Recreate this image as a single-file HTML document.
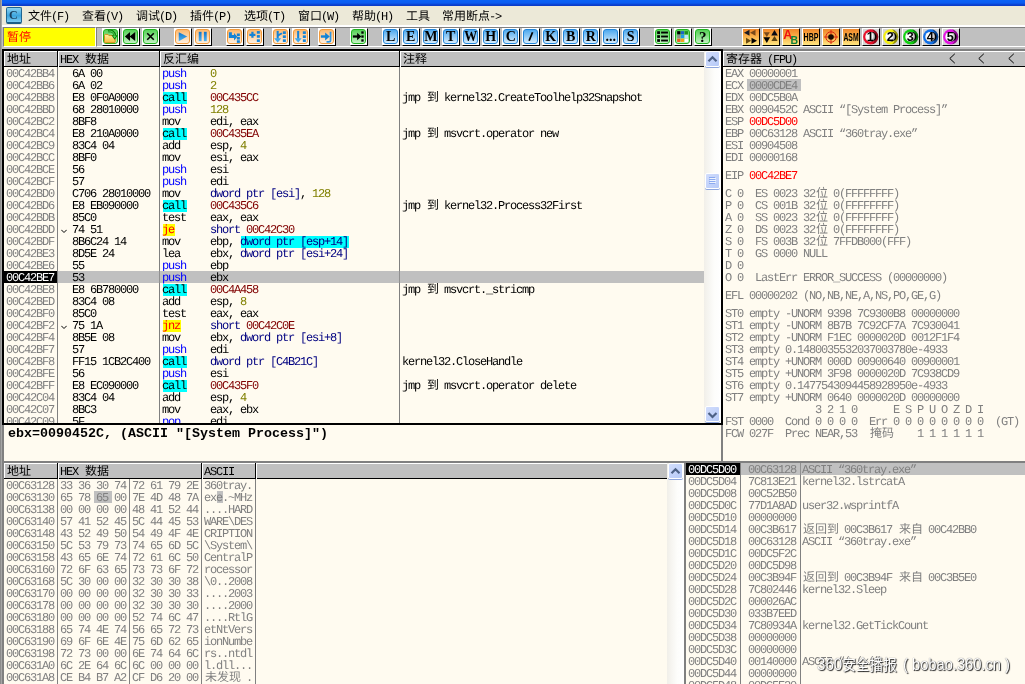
<!DOCTYPE html>
<html lang="zh"><head><meta charset="utf-8"><title>OllyDbg</title><style>
*{box-sizing:border-box}
html,body{margin:0;padding:0}
body{width:1025px;height:684px;overflow:hidden;position:relative;background:#FFFBF0;font-family:"Liberation Mono","Noto Sans CJK SC",monospace;font-size:12px;line-height:12px;color:#000}
div,span,i,b{position:absolute;display:block;font-style:normal;font-weight:normal;white-space:pre}
.r{left:0;height:12px;width:100%}
.r span,.t{font-family:"Liberation Mono","Noto Sans CJK SC",monospace;font-size:12px;letter-spacing:-1.201px;line-height:12px;height:12px;top:1px;text-rendering:geometricPrecision;text-indent:-1px}
.r span.c,.c{font-family:"Noto Sans CJK SC","Liberation Mono",sans-serif;letter-spacing:0;top:0px;text-indent:0}
.g{color:#808080}
.bl{color:#0000FF}.ol{color:#808000}.dr{color:#800000}.nv{color:#000080}.rd{color:#FF0000}.wh{color:#fff}
.cy{background:#00FFFF}.ye{background:#FFFF00}.gr{background:#C0C0C0}.bk{background:#000}
.hd{background:#C0C0C0;height:15px;border-top:1px solid #fff;border-left:1px solid #fff}
.hl{top:15px;height:1px;background:#000}
.hs{top:0;width:2px;height:16px;background:#000;border-right:1px solid #fff}
.vl{width:1px;background:#808080}
.pane{overflow:hidden;background:#FFFBF0}
.btn{width:18px;height:18px;top:28px;border-left:1px solid #fff;border-top:1px solid #fff;border-right:1px solid #000;border-bottom:1px solid #000;background:#fff}
.ic{left:0;top:0;width:15px;height:15px;border-radius:3px}
.gn{border:1.500px solid #1DB51D;background:linear-gradient(#56D056,#84DE84 45%,#C4F2C4)}
.og{border:1.500px solid #F29A3A;background:linear-gradient(#FDB86E,#FFD2A2 45%,#FFF0E0)}
.bu{border:1.500px solid #1F86DC;background:linear-gradient(#4FA9EE,#8CC8F5 45%,#D6ECFD)}
.sq{border-radius:0;width:16px;height:16px;background:linear-gradient(#F08628,#F8AE48 45%,#FFE680)}
.lt{left:0;top:0;width:15.500px;height:16px;text-align:center;font:bold 14px/16px "Liberation Serif",serif;color:#000}
.sb{background:linear-gradient(90deg,#F1EFE9,#FDFDFB 60%,#FFFFFF)}
.sbb{background:linear-gradient(135deg,#D2DDFC,#B6CAF8);border:1px solid #fff;border-radius:2px;box-shadow:0 1px 0 #8EA6DD}
svg{position:absolute;display:block}
</style></head><body>
<div style="left:0;top:0;width:1025px;height:684px;overflow:hidden;will-change:transform">
<div style="left:0;top:0;width:1025px;height:6px;background:linear-gradient(#0A62F6,#0A5CF0 50%,#0A44D4 75%,#0A38C4)"></div>
<div style="left:0;top:6px;width:1025px;height:19px;background:#ECE9D8"></div>
<div style="left:0;top:25px;width:1025px;height:2px;background:#fff"></div>
<div style="left:0;top:27px;width:1025px;height:22px;background:#C0C0C0"></div>
<div style="left:96px;top:27px;width:929px;height:20px;border-top:1px solid #808080;border-left:1px solid #808080;border-bottom:1px solid #fff;background:#C0C0C0"></div>
<div style="left:0;top:0;width:1px;height:684px;background:#8C8C8C"></div>
<div style="left:1px;top:0;width:1px;height:684px;background:#A6A6A6"></div>
<div style="left:6px;top:7px;width:16px;height:17px;border-radius:2px;border:1px solid #1F6690;border-bottom:2px solid #1D5F88;background:linear-gradient(#8AD2F2,#3DA5DE 55%,#7CCBF0)"><b class="lt" style="left:-1.500px;top:-1px;color:#1A3F5C;font-size:12px">C</b></div>
<div class="r" style="top:10px">
<span class="c" style="left:28px">文件</span>
<span style="left:52px">(F)</span>
<span class="c" style="left:82px">查看</span>
<span style="left:106px">(V)</span>
<span class="c" style="left:136px">调试</span>
<span style="left:160px">(D)</span>
<span class="c" style="left:190px">插件</span>
<span style="left:214px">(P)</span>
<span class="c" style="left:244px">选项</span>
<span style="left:268px">(T)</span>
<span class="c" style="left:298px">窗口</span>
<span style="left:322px">(W)</span>
<span class="c" style="left:352px">帮助</span>
<span style="left:376px">(H)</span>
<span class="c" style="left:406px">工具</span>
<span class="c" style="left:442px">常用断点</span>
<span style="left:490px">-&gt;</span>
</div>
<div style="left:3px;top:27px;width:93px;height:20px;border:1px solid #808080;border-right-color:#fff;border-bottom-color:#fff;background:#FFFF00"></div>
<div class="r" style="top:31px"><span class="rd c" style="left:7px">暂停</span></div>
<div class="btn" style="left:102px"><i class="ic gn"></i><svg width="15" height="15" viewBox="0 0 16 16" style="left:0;top:0"><defs><linearGradient id="fg" x1="0" y1="0" x2="0" y2="1"><stop offset="0" stop-color="#FFF0A0"/><stop offset="1" stop-color="#F6BC3C"/></linearGradient></defs><path d="M1.600 6.800q0-1 1-1h2.700l1 1.200h5.700q1 0 1 1v5.600q0 1-1 1h-9.400q-1 0-1-1z" fill="url(#fg)" stroke="#D48A14" stroke-width="1"/><path d="M5.500 2.300C9 1.200 12.400 3 12.600 7.200" stroke="#0B7A0B" stroke-width="2.800" fill="none"/><path d="M9 6.600h6.800l-3.400 4.800z" fill="#0B7A0B"/><path d="M5.800 2.400C9 1.700 11.900 3.300 12.300 7" stroke="#58D858" stroke-width="1.100" fill="none"/><path d="M10.600 7.300h3.600l-1.800 2.600z" fill="#58D858"/></svg></div>
<div class="btn" style="left:122px"><i class="ic gn"></i><svg width="15" height="15" viewBox="0 0 16 16" style="left:0;top:0"><path d="M7.500 3.300v9.400L2 8zM13 3.300v9.400L7 8z" fill="#000"/></svg></div>
<div class="btn" style="left:142px"><i class="ic gn"></i><svg width="15" height="15" viewBox="0 0 16 16" style="left:0;top:0"><path d="M4.500 4.500l7 7M11.500 4.500l-7 7" stroke="#000" stroke-width="1.700"/></svg></div>
<div class="btn" style="left:174px"><i class="ic og"></i><svg width="15" height="15" viewBox="0 0 16 16" style="left:0;top:0"><defs><linearGradient id="bg1" x1="0" y1="0" x2="0" y2="1"><stop offset="0" stop-color="#0E74CC"/><stop offset="1" stop-color="#4FB3F0"/></linearGradient></defs><path d="M4 3.500v9.500L13 8z" fill="url(#bg1)"/></svg></div>
<div class="btn" style="left:194px"><i class="ic og"></i><svg width="15" height="15" viewBox="0 0 16 16" style="left:0;top:0"><rect x="4" y="3" width="3" height="10" fill="url(#bg1)"/><rect x="9.500" y="3" width="3" height="10" fill="url(#bg1)"/></svg></div>
<div class="btn" style="left:226px"><i class="ic og"></i><svg width="15" height="15" viewBox="0 0 16 16" style="left:0;top:0"><path d="M2 3.500h3.200v3h2.300v-2.300l3.500 4-3.500 4v-2.500h-5.500z" fill="#1583D6"/><rect x="10.5" y="4.8" width="3.200" height="2.800" fill="#1583D6"/><rect x="10.5" y="8.5" width="3.200" height="2.800" fill="#1583D6"/><rect x="10.5" y="12" width="3.200" height="2.800" fill="#1583D6"/></svg></div>
<div class="btn" style="left:246px"><i class="ic og"></i><svg width="15" height="15" viewBox="0 0 16 16" style="left:0;top:0"><path d="M2.500 6.200h6.500M5.800 3v6.400" stroke="#1583D6" stroke-width="2.400"/><rect x="10.5" y="2.2" width="3.200" height="2.800" fill="#1583D6"/><rect x="10.5" y="6.5" width="3.200" height="2.800" fill="#1583D6"/><rect x="10.5" y="11" width="3.200" height="2.800" fill="#1583D6"/></svg></div>
<div class="btn" style="left:272px"><i class="ic og"></i><svg width="15" height="15" viewBox="0 0 16 16" style="left:0;top:0"><path d="M5 2v8.500" stroke="#1583D6" stroke-width="2.200"/><path d="M5 7l4.500-2.500" stroke="#1583D6" stroke-width="2"/><path d="M1.200 9.800h7.600L5 14.500z" fill="#3FA6EA"/><rect x="10.5" y="2.5" width="3.200" height="2.800" fill="#1583D6"/><rect x="10.5" y="6.8" width="3.200" height="2.800" fill="#1583D6"/><rect x="10.5" y="11" width="3.200" height="2.800" fill="#1583D6"/></svg></div>
<div class="btn" style="left:292px"><i class="ic og"></i><svg width="15" height="15" viewBox="0 0 16 16" style="left:0;top:0"><path d="M5.500 2v8.500" stroke="#1583D6" stroke-width="2.200"/><path d="M1.700 9.800h7.600L5.500 14.500z" fill="#3FA6EA"/><rect x="10.5" y="2.5" width="3.200" height="2.800" fill="#1583D6"/><rect x="10.5" y="6.8" width="3.200" height="2.800" fill="#1583D6"/><rect x="10.5" y="11" width="3.200" height="2.800" fill="#1583D6"/></svg></div>
<div class="btn" style="left:318px"><i class="ic og"></i><svg width="15" height="15" viewBox="0 0 16 16" style="left:0;top:0"><path d="M2 8h7" stroke="#1583D6" stroke-width="2.600"/><path d="M6.500 3.800L11.500 8 6.500 12.200z" fill="#1583D6"/><path d="M12.300 3v9q0 1.800-1.800 1.800H8" stroke="#2E96E2" stroke-width="1.800" fill="none"/></svg></div>
<div class="btn" style="left:350px"><i class="ic gn"></i><svg width="15" height="15" viewBox="0 0 16 16" style="left:0;top:0"><path d="M2 8h6" stroke="#000" stroke-width="2.400"/><path d="M6.500 4L11 8 6.500 12z" fill="#000"/><rect x="11" y="2.500" width="2.500" height="2.500" fill="#000"/><rect x="11" y="6.800" width="2.500" height="2.500" fill="#000"/><rect x="11" y="11" width="2.500" height="2.500" fill="#000"/></svg></div>
<div class="btn" style="left:382px"><i class="ic bu"></i><b class="lt">L</b></div>
<div class="btn" style="left:402px"><i class="ic bu"></i><b class="lt">E</b></div>
<div class="btn" style="left:422px"><i class="ic bu"></i><b class="lt">M</b></div>
<div class="btn" style="left:442px"><i class="ic bu"></i><b class="lt">T</b></div>
<div class="btn" style="left:462px"><i class="ic bu"></i><b class="lt" style="transform:scaleX(.92)">W</b></div>
<div class="btn" style="left:482px"><i class="ic bu"></i><b class="lt">H</b></div>
<div class="btn" style="left:502px"><i class="ic bu"></i><b class="lt">C</b></div>
<div class="btn" style="left:522px"><i class="ic bu"></i><svg width="15" height="15" viewBox="0 0 16 16" style="left:0;top:0"><path d="M10.200 3.500L6.500 12.500" stroke="#000" stroke-width="1.900"/></svg></div>
<div class="btn" style="left:542px"><i class="ic bu"></i><b class="lt">K</b></div>
<div class="btn" style="left:562px"><i class="ic bu"></i><b class="lt">B</b></div>
<div class="btn" style="left:582px"><i class="ic bu"></i><b class="lt">R</b></div>
<div class="btn" style="left:602px"><i class="ic bu"></i><b class="lt" style="top:0;font-size:14px;letter-spacing:0">...</b></div>
<div class="btn" style="left:622px"><i class="ic bu"></i><b class="lt">S</b></div>
<div class="btn" style="left:654px"><i class="ic gn"></i><svg width="15" height="15" viewBox="0 0 16 16" style="left:0;top:0"><g fill="#000"><rect x="2.300" y="2.400" width="3" height="2.900"/><rect x="2.300" y="6.600" width="3" height="2.900"/><rect x="2.300" y="10.800" width="3" height="2.900"/><rect x="6.500" y="2.800" width="7.300" height="2"/><rect x="6.500" y="7" width="7.300" height="2"/><rect x="6.500" y="11.300" width="7.300" height="2"/></g></svg></div>
<div class="btn" style="left:674px"><i class="ic gn"></i><svg width="15" height="15" viewBox="0 0 16 16" style="left:0;top:0"><rect x="2.3" y="2.3" width="3.500" height="3.500" fill="#000"/><rect x="6.3" y="2.3" width="3.500" height="3.500" fill="#1A62C8"/><rect x="10.3" y="2.3" width="3.500" height="3.500" fill="#1E8E1E"/><rect x="2.3" y="6.3" width="3.500" height="3.500" fill="#8C8C8C"/><rect x="6.3" y="6.3" width="3.500" height="3.500" fill="#1C9CE8"/><rect x="10.3" y="6.3" width="3.500" height="3.500" fill="#BDE4FB"/><rect x="2.3" y="10.3" width="3.500" height="3.500" fill="#F05A1E"/><rect x="6.3" y="10.3" width="3.500" height="3.500" fill="#F7A11A"/><rect x="10.3" y="10.3" width="3.500" height="3.500" fill="#FFFFFF"/></svg></div>
<div class="btn" style="left:694px"><i class="ic gn"></i><b class="lt" style="font-size:15px;top:-.5px">?</b></div>
<div class="btn" style="left:742px"><i class="ic sq"></i><svg width="16" height="16" viewBox="0 0 16 16" style="left:0;top:0"><path d="M6.500 .8v6L1 3.800z" fill="#1A1A22"/><path d="M12.500 .8v6L7 3.800z" fill="#7A4A1A"/><path d="M3 8.800v6l5.200-3z" fill="#6A4A10"/><path d="M8.500 8.800v6l5.500-3z" fill="#000"/></svg></div>
<div class="btn" style="left:762px"><i class="ic sq"></i><svg width="16" height="16" viewBox="0 0 16 16" style="left:0;top:0"><path d="M.8 3.200h6L3.800 8z" fill="#7A4A1A"/><path d="M.5 8.300h6.600L3.800 14z" fill="#000"/><path d="M8.200 6.600h6.600L11.500 1z" fill="#0A0A14"/><path d="M8.400 12h6.200L11.500 7z" fill="#5A4210"/></svg></div>
<div class="btn" style="left:782px"><i class="ic sq"></i><b class="lt" style="font:bold 12.500px/12px 'Liberation Sans',sans-serif;color:#F01010;left:-3px;top:0">A</b><b class="lt" style="font:bold 10.500px/10px 'Liberation Sans',sans-serif;color:#108038;left:3.500px;top:5.500px">B</b></div>
<div class="btn" style="left:802px"><i class="ic sq"></i><b class="lt" style="font:bold 11px/16px 'Liberation Sans',sans-serif;left:-8px;top:0;width:32px;transform:scaleX(.64)">HBP</b></div>
<div class="btn" style="left:822px"><i class="ic sq"></i><svg width="16" height="16" viewBox="0 0 16 16" style="left:0;top:0"><circle cx="8" cy="8" r="5.200" fill="none" stroke="#D82A10" stroke-width="1"/><path d="M8 1v14M1 8h14" stroke="#D82A10" stroke-width="1"/><circle cx="8" cy="8" r="2.800" fill="#1A0A00"/></svg></div>
<div class="btn" style="left:842px"><i class="ic sq"></i><b class="lt" style="font:bold 11px/16px 'Liberation Sans',sans-serif;left:-8px;top:0;width:32px;transform:scaleX(.62)">ASM</b></div>
<svg width="0" height="0" style="left:0;top:0"><defs><radialGradient id="bw" cx=".32" cy=".42" r=".8"><stop offset="0" stop-color="#fff"/><stop offset=".55" stop-color="#f4f4f4"/><stop offset="1" stop-color="#555"/></radialGradient></defs></svg>
<div class="btn" style="left:862px"><i style="left:0;top:0;width:16px;height:16px;background:#D6D6D6"></i><svg width="16" height="16" viewBox="0 0 16 16" style="left:0;top:0"><circle cx="7.700" cy="7.800" r="7.600" fill="#E8102A"/><path d="M9 .3a7.600 7.600 0 0 1 0 15a10 10 0 0 0 0-15z" fill="#000" opacity=".4"/><circle cx="8.800" cy="7.800" r="4.700" fill="#000"/><circle cx="7.200" cy="7.800" r="4.900" fill="url(#bw)"/></svg><b class="lt" style="font:bold 12.500px/16px 'Liberation Sans',sans-serif;top:0;left:-.5px">1</b></div>
<div class="btn" style="left:882px"><i style="left:0;top:0;width:16px;height:16px;background:#D6D6D6"></i><svg width="16" height="16" viewBox="0 0 16 16" style="left:0;top:0"><circle cx="7.700" cy="7.800" r="7.600" fill="#F2EE10"/><path d="M9 .3a7.600 7.600 0 0 1 0 15a10 10 0 0 0 0-15z" fill="#000" opacity=".4"/><circle cx="8.800" cy="7.800" r="4.700" fill="#000"/><circle cx="7.200" cy="7.800" r="4.900" fill="url(#bw)"/></svg><b class="lt" style="font:bold 12.500px/16px 'Liberation Sans',sans-serif;top:0;left:-.5px">2</b></div>
<div class="btn" style="left:902px"><i style="left:0;top:0;width:16px;height:16px;background:#D6D6D6"></i><svg width="16" height="16" viewBox="0 0 16 16" style="left:0;top:0"><circle cx="7.700" cy="7.800" r="7.600" fill="#12D212"/><path d="M9 .3a7.600 7.600 0 0 1 0 15a10 10 0 0 0 0-15z" fill="#000" opacity=".4"/><circle cx="8.800" cy="7.800" r="4.700" fill="#000"/><circle cx="7.200" cy="7.800" r="4.900" fill="url(#bw)"/></svg><b class="lt" style="font:bold 12.500px/16px 'Liberation Sans',sans-serif;top:0;left:-.5px">3</b></div>
<div class="btn" style="left:922px"><i style="left:0;top:0;width:16px;height:16px;background:#D6D6D6"></i><svg width="16" height="16" viewBox="0 0 16 16" style="left:0;top:0"><circle cx="7.700" cy="7.800" r="7.600" fill="#1070E8"/><path d="M9 .3a7.600 7.600 0 0 1 0 15a10 10 0 0 0 0-15z" fill="#000" opacity=".4"/><circle cx="8.800" cy="7.800" r="4.700" fill="#000"/><circle cx="7.200" cy="7.800" r="4.900" fill="url(#bw)"/></svg><b class="lt" style="font:bold 12.500px/16px 'Liberation Sans',sans-serif;top:0;left:-.5px">4</b></div>
<div class="btn" style="left:942px"><i style="left:0;top:0;width:16px;height:16px;background:#D6D6D6"></i><svg width="16" height="16" viewBox="0 0 16 16" style="left:0;top:0"><circle cx="7.700" cy="7.800" r="7.600" fill="#E412E4"/><path d="M9 .3a7.600 7.600 0 0 1 0 15a10 10 0 0 0 0-15z" fill="#000" opacity=".4"/><circle cx="8.800" cy="7.800" r="4.700" fill="#000"/><circle cx="7.200" cy="7.800" r="4.900" fill="url(#bw)"/></svg><b class="lt" style="font:bold 12.500px/16px 'Liberation Sans',sans-serif;top:0;left:-.5px">5</b></div>
<div style="left:723px;top:49px;width:302px;height:2px;background:#808080"></div>
<div style="left:2px;top:49px;width:721px;height:376px;background:#000"></div>
<div class="pane" style="left:4px;top:51px;width:717px;height:372px">
<div class="hd" style="left:0;top:0;width:701px"></div>
<div class="hl" style="left:0;width:701px"></div>
<div class="hs" style="left:53px"></div>
<div class="vl" style="left:53px;top:16px;height:360px"></div>
<div class="hs" style="left:155px"></div>
<div class="vl" style="left:155px;top:16px;height:360px"></div>
<div class="hs" style="left:395px"></div>
<div class="vl" style="left:395px;top:16px;height:360px"></div>
<div class="r" style="top:2px"><span class="c" style="left:3px">地址</span><span style="left:57px">HEX</span><span class="c" style="left:81px">数据</span><span class="c" style="left:159px">反汇编</span><span class="c" style="left:399px">注释</span></div>
<div class="r" style="top:16px"><span class="g" style="left:3px">00C42BB4</span><span style="left:69px">6A 00</span><span class="bl" style="left:159px">push</span><span class="ol" style="left:207px">0</span></div>
<div class="r" style="top:28px"><span class="g" style="left:3px">00C42BB6</span><span style="left:69px">6A 02</span><span class="bl" style="left:159px">push</span><span class="ol" style="left:207px">2</span></div>
<div class="r" style="top:40px"><span class="g" style="left:3px">00C42BB8</span><span style="left:69px">E8 0F0A0000</span><span class="cy" style="left:159px;width:24px">call</span><span class="dr" style="left:207px">00C435CC</span><span style="left:399px">jmp</span><span class="c" style="left:423px">到</span><span style="left:441px">kernel32.CreateToolhelp32Snapshot</span></div>
<div class="r" style="top:52px"><span class="g" style="left:3px">00C42BBD</span><span style="left:69px">68 28010000</span><span class="bl" style="left:159px">push</span><span class="ol" style="left:207px">128</span></div>
<div class="r" style="top:64px"><span class="g" style="left:3px">00C42BC2</span><span style="left:69px">8BF8</span><span style="left:159px">mov</span><span style="left:207px">edi, eax</span></div>
<div class="r" style="top:76px"><span class="g" style="left:3px">00C42BC4</span><span style="left:69px">E8 210A0000</span><span class="cy" style="left:159px;width:24px">call</span><span class="dr" style="left:207px">00C435EA</span><span style="left:399px">jmp</span><span class="c" style="left:423px">到</span><span style="left:441px">msvcrt.operator new</span></div>
<div class="r" style="top:88px"><span class="g" style="left:3px">00C42BC9</span><span style="left:69px">83C4 04</span><span style="left:159px">add</span><span style="left:207px">esp,</span><span class="ol" style="left:237px">4</span></div>
<div class="r" style="top:100px"><span class="g" style="left:3px">00C42BCC</span><span style="left:69px">8BF0</span><span style="left:159px">mov</span><span style="left:207px">esi, eax</span></div>
<div class="r" style="top:112px"><span class="g" style="left:3px">00C42BCE</span><span style="left:69px">56</span><span class="bl" style="left:159px">push</span><span style="left:207px">esi</span></div>
<div class="r" style="top:124px"><span class="g" style="left:3px">00C42BCF</span><span style="left:69px">57</span><span class="bl" style="left:159px">push</span><span style="left:207px">edi</span></div>
<div class="r" style="top:136px"><span class="g" style="left:3px">00C42BD0</span><span style="left:69px">C706 28010000</span><span style="left:159px">mov</span><span class="nv" style="left:207px">dword ptr [esi]</span><span style="left:297px">,</span><span class="ol" style="left:309px">128</span></div>
<div class="r" style="top:148px"><span class="g" style="left:3px">00C42BD6</span><span style="left:69px">E8 EB090000</span><span class="cy" style="left:159px;width:24px">call</span><span class="dr" style="left:207px">00C435C6</span><span style="left:399px">jmp</span><span class="c" style="left:423px">到</span><span style="left:441px">kernel32.Process32First</span></div>
<div class="r" style="top:160px"><span class="g" style="left:3px">00C42BDB</span><span style="left:69px">85C0</span><span style="left:159px">test</span><span style="left:207px">eax, eax</span></div>
<div class="r" style="top:172px"><span class="g" style="left:3px">00C42BDD</span><svg width="6" height="12" viewBox="0 0 6 12" style="left:57px;top:0"><path d="M.3 6.800L3 9.500 5.700 6.800" stroke="#000" stroke-width="1" fill="none"/></svg><span style="left:69px">74 51</span><span class="rd ye" style="left:159px;width:12px">je</span><span class="nv" style="left:207px">short</span><span class="dr" style="left:243px">00C42C30</span></div>
<div class="r" style="top:184px"><span class="g" style="left:3px">00C42BDF</span><span style="left:69px">8B6C24 14</span><span style="left:159px">mov</span><span style="left:207px">ebp,</span><span class="nv cy" style="left:237px;width:108px">dword ptr [esp+14]</span></div>
<div class="r" style="top:196px"><span class="g" style="left:3px">00C42BE3</span><span style="left:69px">8D5E 24</span><span style="left:159px">lea</span><span style="left:207px">ebx,</span><span class="nv" style="left:237px">dword ptr [esi+24]</span></div>
<div class="r" style="top:208px"><span class="g" style="left:3px">00C42BE6</span><span style="left:69px">55</span><span class="bl" style="left:159px">push</span><span style="left:207px">ebp</span></div>
<div class="r" style="top:220px"><i class="bk" style="left:0;top:0;width:53px;height:12px"></i><i class="gr" style="left:54px;top:0;width:647px;height:12px"></i><i style="left:155px;top:0;width:1px;height:12px;background:#909090"></i><i style="left:395px;top:0;width:1px;height:12px;background:#909090"></i><span class="wh" style="left:3px">00C42BE7</span><span style="left:69px">53</span><span class="bl" style="left:159px">push</span><span style="left:207px">ebx</span></div>
<div class="r" style="top:232px"><span class="g" style="left:3px">00C42BE8</span><span style="left:69px">E8 6B780000</span><span class="cy" style="left:159px;width:24px">call</span><span class="dr" style="left:207px">00C4A458</span><span style="left:399px">jmp</span><span class="c" style="left:423px">到</span><span style="left:441px">msvcrt._stricmp</span></div>
<div class="r" style="top:244px"><span class="g" style="left:3px">00C42BED</span><span style="left:69px">83C4 08</span><span style="left:159px">add</span><span style="left:207px">esp,</span><span class="ol" style="left:237px">8</span></div>
<div class="r" style="top:256px"><span class="g" style="left:3px">00C42BF0</span><span style="left:69px">85C0</span><span style="left:159px">test</span><span style="left:207px">eax, eax</span></div>
<div class="r" style="top:268px"><span class="g" style="left:3px">00C42BF2</span><svg width="6" height="12" viewBox="0 0 6 12" style="left:57px;top:0"><path d="M.3 6.800L3 9.500 5.700 6.800" stroke="#000" stroke-width="1" fill="none"/></svg><span style="left:69px">75 1A</span><span class="rd ye" style="left:159px;width:18px">jnz</span><span class="nv" style="left:207px">short</span><span class="dr" style="left:243px">00C42C0E</span></div>
<div class="r" style="top:280px"><span class="g" style="left:3px">00C42BF4</span><span style="left:69px">8B5E 08</span><span style="left:159px">mov</span><span style="left:207px">ebx,</span><span class="nv" style="left:237px">dword ptr [esi+8]</span></div>
<div class="r" style="top:292px"><span class="g" style="left:3px">00C42BF7</span><span style="left:69px">57</span><span class="bl" style="left:159px">push</span><span style="left:207px">edi</span></div>
<div class="r" style="top:304px"><span class="g" style="left:3px">00C42BF8</span><span style="left:69px">FF15 1CB2C400</span><span class="cy" style="left:159px;width:24px">call</span><span class="nv" style="left:207px">dword ptr [C4B21C]</span><span style="left:399px">kernel32.CloseHandle</span></div>
<div class="r" style="top:316px"><span class="g" style="left:3px">00C42BFE</span><span style="left:69px">56</span><span class="bl" style="left:159px">push</span><span style="left:207px">esi</span></div>
<div class="r" style="top:328px"><span class="g" style="left:3px">00C42BFF</span><span style="left:69px">E8 EC090000</span><span class="cy" style="left:159px;width:24px">call</span><span class="dr" style="left:207px">00C435F0</span><span style="left:399px">jmp</span><span class="c" style="left:423px">到</span><span style="left:441px">msvcrt.operator delete</span></div>
<div class="r" style="top:340px"><span class="g" style="left:3px">00C42C04</span><span style="left:69px">83C4 04</span><span style="left:159px">add</span><span style="left:207px">esp,</span><span class="ol" style="left:237px">4</span></div>
<div class="r" style="top:352px"><span class="g" style="left:3px">00C42C07</span><span style="left:69px">8BC3</span><span style="left:159px">mov</span><span style="left:207px">eax, ebx</span></div>
<div class="r" style="top:364px"><span class="g" style="left:3px">00C42C09</span><span style="left:69px">5F</span><span class="bl" style="left:159px">pop</span><span style="left:207px">edi</span></div>
<div class="sb" style="left:700px;top:0px;width:17px;height:372px"><i class="sbb" style="left:1px;top:0;width:15px;height:16px"></i><svg width="15" height="15" viewBox="0 0 15 15" style="left:1px;top:0"><path d="M3.500 10.200L7.500 6.200 11.500 10.200" stroke="#4D6185" stroke-width="2.200" fill="none"/></svg><i class="sbb" style="left:1px;top:122px;width:15px;height:16px"></i><svg width="15" height="15" viewBox="0 0 15 15" style="left:1px;top:122px"><path d="M4 4.500h6M4 6.500h6M4 8.500h6M4 10.500h6" stroke="#8CAAF0" stroke-width="1"/><path d="M5 5.500h6M5 7.500h6M5 9.500h6" stroke="#EEF4FE" stroke-width="1"/></svg><i class="sbb" style="left:1px;top:355px;width:15px;height:16px"></i><svg width="15" height="15" viewBox="0 0 15 15" style="left:1px;top:356px"><path d="M3.500 6L7.500 10 11.500 6" stroke="#4D6185" stroke-width="2.200" fill="none"/></svg></div>
</div>
<div style="left:2px;top:425px;width:2px;height:259px;background:#808080"></div>
<div style="left:8px;top:426px;font:bold 13.330px/15px 'Liberation Mono',monospace;letter-spacing:0;color:#000">ebx=0090452C, (ASCII &quot;[System Process]&quot;)</div>
<div style="left:721px;top:425px;width:2px;height:38px;background:#808080"></div>
<div class="pane" style="left:723px;top:51px;width:302px;height:410px">
<div class="hd" style="left:0;top:0;width:302px"></div>
<div class="hl" style="left:0;width:302px"></div>
<div class="r" style="top:2px"><span class="c" style="left:3px">寄存器</span><span style="left:45px">(FPU)</span></div>
<svg width="8" height="12" viewBox="0 0 8 12" style="left:226px;top:2px"><path d="M5.800 .8L.8 5.500l5 4.700" stroke="#000" stroke-width="1" fill="none"/></svg>
<svg width="8" height="12" viewBox="0 0 8 12" style="left:255px;top:2px"><path d="M5.800 .8L.8 5.500l5 4.700" stroke="#000" stroke-width="1" fill="none"/></svg>
<svg width="8" height="12" viewBox="0 0 8 12" style="left:285px;top:2px"><path d="M5.800 .8L.8 5.500l5 4.700" stroke="#000" stroke-width="1" fill="none"/></svg>
<div class="r" style="top:16px"><span class="g" style="left:3px">EAX 00000001</span></div>
<div class="r" style="top:28px"><span class="g" style="left:3px">ECX</span><i class="gr" style="left:24px;top:0;width:54px;height:12px"></i><span class="g" style="left:27px">0000CDE4</span></div>
<div class="r" style="top:40px"><span class="g" style="left:3px">EDX 00DC5B0A</span></div>
<div class="r" style="top:52px"><span class="g" style="left:3px">EBX 0090452C ASCII “[System Process]”</span></div>
<div class="r" style="top:64px"><span class="g" style="left:3px">ESP</span><span class="rd" style="left:27px">00DC5D00</span></div>
<div class="r" style="top:76px"><span class="g" style="left:3px">EBP 00C63128 ASCII “360tray.exe”</span></div>
<div class="r" style="top:88px"><span class="g" style="left:3px">ESI 00904508</span></div>
<div class="r" style="top:100px"><span class="g" style="left:3px">EDI 00000168</span></div>
<div class="r" style="top:118px"><span class="g" style="left:3px">EIP</span><span class="rd" style="left:27px">00C42BE7</span></div>
<div class="r" style="top:136px"><span class="g" style="left:3px">C 0</span><span class="g" style="left:33px">ES 0023 32</span><span class="g c" style="left:93px">位</span><span class="g" style="left:111px">0(FFFFFFFF)</span></div>
<div class="r" style="top:148px"><span class="g" style="left:3px">P 0</span><span class="g" style="left:33px">CS 001B 32</span><span class="g c" style="left:93px">位</span><span class="g" style="left:111px">0(FFFFFFFF)</span></div>
<div class="r" style="top:160px"><span class="g" style="left:3px">A 0</span><span class="g" style="left:33px">SS 0023 32</span><span class="g c" style="left:93px">位</span><span class="g" style="left:111px">0(FFFFFFFF)</span></div>
<div class="r" style="top:172px"><span class="g" style="left:3px">Z 0</span><span class="g" style="left:33px">DS 0023 32</span><span class="g c" style="left:93px">位</span><span class="g" style="left:111px">0(FFFFFFFF)</span></div>
<div class="r" style="top:184px"><span class="g" style="left:3px">S 0</span><span class="g" style="left:33px">FS 003B 32</span><span class="g c" style="left:93px">位</span><span class="g" style="left:111px">7FFDB000(FFF)</span></div>
<div class="r" style="top:196px"><span class="g" style="left:3px">T 0</span><span class="g" style="left:33px">GS 0000 NULL</span></div>
<div class="r" style="top:208px"><span class="g" style="left:3px">D 0</span></div>
<div class="r" style="top:220px"><span class="g" style="left:3px">O 0</span><span class="g" style="left:33px">LastErr ERROR_SUCCESS (00000000)</span></div>
<div class="r" style="top:238px"><span class="g" style="left:3px">EFL 00000202 (NO,NB,NE,A,NS,PO,GE,G)</span></div>
<div class="r" style="top:256px"><span class="g" style="left:3px">ST0 empty -UNORM 9398 7C9300B8 00000000</span></div>
<div class="r" style="top:268px"><span class="g" style="left:3px">ST1 empty -UNORM 8B7B 7C92CF7A 7C930041</span></div>
<div class="r" style="top:280px"><span class="g" style="left:3px">ST2 empty -UNORM F1EC 0000020D 0012F1F4</span></div>
<div class="r" style="top:292px"><span class="g" style="left:3px">ST3 empty 0.1480035532037003780e-4933</span></div>
<div class="r" style="top:304px"><span class="g" style="left:3px">ST4 empty +UNORM 000D 00900640 00900001</span></div>
<div class="r" style="top:316px"><span class="g" style="left:3px">ST5 empty +UNORM 3F98 0000020D 7C938CD9</span></div>
<div class="r" style="top:328px"><span class="g" style="left:3px">ST6 empty 0.1477543094458928950e-4933</span></div>
<div class="r" style="top:340px"><span class="g" style="left:3px">ST7 empty +UNORM 0640 0000020D 00000000</span></div>
<div class="r" style="top:352px"><span class="g" style="left:93px">3 2 1 0</span><span class="g" style="left:171px">E S P U O Z D I</span></div>
<div class="r" style="top:364px"><span class="g" style="left:3px">FST 0000</span><span class="g" style="left:63px">Cond 0 0 0 0</span><span class="g" style="left:147px">Err 0 0 0 0 0 0 0 0</span><span class="g" style="left:273px">(GT)</span></div>
<div class="r" style="top:376px"><span class="g" style="left:3px">FCW 027F</span><span class="g" style="left:63px">Prec NEAR,53</span><span class="g c" style="left:147px">掩码</span><span class="g" style="left:195px">1 1 1 1 1 1</span></div>
</div>
<div style="left:2px;top:461px;width:1023px;height:2px;background:#808080"></div>
<div style="left:684px;top:461px;width:2px;height:223px;background:#808080"></div>
<div class="pane" style="left:4px;top:463px;width:680px;height:221px">
<div class="hd" style="left:0;top:0;width:663px"></div>
<div class="hl" style="left:0;width:663px"></div>
<div class="hs" style="left:53px"></div>
<div class="hs" style="left:197px"></div>
<div class="hs" style="left:251px"></div>
<div class="vl" style="left:53px;top:16px;height:210px"></div>
<div class="vl" style="left:125px;top:16px;height:210px"></div>
<div class="vl" style="left:197px;top:16px;height:210px"></div>
<div class="vl" style="left:251px;top:16px;height:210px"></div>
<div class="r" style="top:2px"><span class="c" style="left:3px">地址</span><span style="left:57px">HEX</span><span class="c" style="left:81px">数据</span><span style="left:201px">ASCII</span></div>
<div class="r" style="top:16px"><span class="g" style="left:3px">00C63128</span><span class="g" style="left:57px">33 36 30 74</span><span class="g" style="left:129px">72 61 79 2E</span><span class="g" style="left:201px">360tray.</span></div>
<div class="r" style="top:28px"><i class="gr" style="left:90px;top:0;width:18px;height:12px"></i><i class="gr" style="left:213px;top:0;width:6px;height:12px"></i><span class="g" style="left:3px">00C63130</span><span class="g" style="left:57px">65 78 65 00</span><span class="g" style="left:129px">7E 4D 48 7A</span><span class="g" style="left:201px">exe.~MHz</span></div>
<div class="r" style="top:40px"><span class="g" style="left:3px">00C63138</span><span class="g" style="left:57px">00 00 00 00</span><span class="g" style="left:129px">48 41 52 44</span><span class="g" style="left:201px">....HARD</span></div>
<div class="r" style="top:52px"><span class="g" style="left:3px">00C63140</span><span class="g" style="left:57px">57 41 52 45</span><span class="g" style="left:129px">5C 44 45 53</span><span class="g" style="left:201px">WARE\DES</span></div>
<div class="r" style="top:64px"><span class="g" style="left:3px">00C63148</span><span class="g" style="left:57px">43 52 49 50</span><span class="g" style="left:129px">54 49 4F 4E</span><span class="g" style="left:201px">CRIPTION</span></div>
<div class="r" style="top:76px"><span class="g" style="left:3px">00C63150</span><span class="g" style="left:57px">5C 53 79 73</span><span class="g" style="left:129px">74 65 6D 5C</span><span class="g" style="left:201px">\System\</span></div>
<div class="r" style="top:88px"><span class="g" style="left:3px">00C63158</span><span class="g" style="left:57px">43 65 6E 74</span><span class="g" style="left:129px">72 61 6C 50</span><span class="g" style="left:201px">CentralP</span></div>
<div class="r" style="top:100px"><span class="g" style="left:3px">00C63160</span><span class="g" style="left:57px">72 6F 63 65</span><span class="g" style="left:129px">73 73 6F 72</span><span class="g" style="left:201px">rocessor</span></div>
<div class="r" style="top:112px"><span class="g" style="left:3px">00C63168</span><span class="g" style="left:57px">5C 30 00 00</span><span class="g" style="left:129px">32 30 30 38</span><span class="g" style="left:201px">\0..2008</span></div>
<div class="r" style="top:124px"><span class="g" style="left:3px">00C63170</span><span class="g" style="left:57px">00 00 00 00</span><span class="g" style="left:129px">32 30 30 33</span><span class="g" style="left:201px">....2003</span></div>
<div class="r" style="top:136px"><span class="g" style="left:3px">00C63178</span><span class="g" style="left:57px">00 00 00 00</span><span class="g" style="left:129px">32 30 30 30</span><span class="g" style="left:201px">....2000</span></div>
<div class="r" style="top:148px"><span class="g" style="left:3px">00C63180</span><span class="g" style="left:57px">00 00 00 00</span><span class="g" style="left:129px">52 74 6C 47</span><span class="g" style="left:201px">....RtlG</span></div>
<div class="r" style="top:160px"><span class="g" style="left:3px">00C63188</span><span class="g" style="left:57px">65 74 4E 74</span><span class="g" style="left:129px">56 65 72 73</span><span class="g" style="left:201px">etNtVers</span></div>
<div class="r" style="top:172px"><span class="g" style="left:3px">00C63190</span><span class="g" style="left:57px">69 6F 6E 4E</span><span class="g" style="left:129px">75 6D 62 65</span><span class="g" style="left:201px">ionNumbe</span></div>
<div class="r" style="top:184px"><span class="g" style="left:3px">00C63198</span><span class="g" style="left:57px">72 73 00 00</span><span class="g" style="left:129px">6E 74 64 6C</span><span class="g" style="left:201px">rs..ntdl</span></div>
<div class="r" style="top:196px"><span class="g" style="left:3px">00C631A0</span><span class="g" style="left:57px">6C 2E 64 6C</span><span class="g" style="left:129px">6C 00 00 00</span><span class="g" style="left:201px">l.dll...</span></div>
<div class="r" style="top:208px"><span class="g" style="left:3px">00C631A8</span><span class="g" style="left:57px">CE B4 B7 A2</span><span class="g" style="left:129px">CF D6 20 00</span><span class="g c" style="left:201px">未发现</span><span class="g" style="left:243px">.</span></div>
<div class="sb" style="left:663px;top:0px;width:17px;height:221px"><i class="sbb" style="left:1px;top:0;width:15px;height:16px"></i><svg width="15" height="15" viewBox="0 0 15 15" style="left:1px;top:0"><path d="M3.500 10.200L7.500 6.200 11.500 10.200" stroke="#4D6185" stroke-width="2.200" fill="none"/></svg></div>
</div>
<div class="pane" style="left:686px;top:463px;width:339px;height:221px">
<div class="vl" style="left:54px;top:0;height:221px"></div>
<div class="vl" style="left:114px;top:0;height:221px"></div>
<div class="r" style="top:0px"><i class="bk" style="left:0;top:0;width:54px;height:12px"></i><i class="gr" style="left:55px;top:0;width:284px;height:12px"></i><i style="left:114px;top:0;width:1px;height:12px;background:#909090"></i><span class="wh" style="left:3px">00DC5D00</span><span class="g" style="left:63px">00C63128</span><span class="g" style="left:117px">ASCII “360tray.exe”</span></div>
<div class="r" style="top:12px"><span class="g" style="left:3px">00DC5D04</span><span class="g" style="left:63px">7C813E21</span><span class="g" style="left:117px">kernel32.lstrcatA</span></div>
<div class="r" style="top:24px"><span class="g" style="left:3px">00DC5D08</span><span class="g" style="left:63px">00C52B50</span></div>
<div class="r" style="top:36px"><span class="g" style="left:3px">00DC5D0C</span><span class="g" style="left:63px">77D1A8AD</span><span class="g" style="left:117px">user32.wsprintfA</span></div>
<div class="r" style="top:48px"><span class="g" style="left:3px">00DC5D10</span><span class="g" style="left:63px">00000000</span></div>
<div class="r" style="top:60px"><span class="g" style="left:3px">00DC5D14</span><span class="g" style="left:63px">00C3B617</span><span class="g c" style="left:117px">返回到</span><span class="g" style="left:159px">00C3B617</span><span class="g c" style="left:213px">来自</span><span class="g" style="left:243px">00C42BB0</span></div>
<div class="r" style="top:72px"><span class="g" style="left:3px">00DC5D18</span><span class="g" style="left:63px">00C63128</span><span class="g" style="left:117px">ASCII “360tray.exe”</span></div>
<div class="r" style="top:84px"><span class="g" style="left:3px">00DC5D1C</span><span class="g" style="left:63px">00DC5F2C</span></div>
<div class="r" style="top:96px"><span class="g" style="left:3px">00DC5D20</span><span class="g" style="left:63px">00DC5D98</span></div>
<div class="r" style="top:108px"><span class="g" style="left:3px">00DC5D24</span><span class="g" style="left:63px">00C3B94F</span><span class="g c" style="left:117px">返回到</span><span class="g" style="left:159px">00C3B94F</span><span class="g c" style="left:213px">来自</span><span class="g" style="left:243px">00C3B5E0</span></div>
<div class="r" style="top:120px"><span class="g" style="left:3px">00DC5D28</span><span class="g" style="left:63px">7C802446</span><span class="g" style="left:117px">kernel32.Sleep</span></div>
<div class="r" style="top:132px"><span class="g" style="left:3px">00DC5D2C</span><span class="g" style="left:63px">000026AC</span></div>
<div class="r" style="top:144px"><span class="g" style="left:3px">00DC5D30</span><span class="g" style="left:63px">033B7EED</span></div>
<div class="r" style="top:156px"><span class="g" style="left:3px">00DC5D34</span><span class="g" style="left:63px">7C80934A</span><span class="g" style="left:117px">kernel32.GetTickCount</span></div>
<div class="r" style="top:168px"><span class="g" style="left:3px">00DC5D38</span><span class="g" style="left:63px">00000000</span></div>
<div class="r" style="top:180px"><span class="g" style="left:3px">00DC5D3C</span><span class="g" style="left:63px">00000000</span></div>
<div class="r" style="top:192px"><span class="g" style="left:3px">00DC5D40</span><span class="g" style="left:63px">00140000</span><span class="g" style="left:117px">ASCII “(x(x(”</span></div>
<div class="r" style="top:204px"><span class="g" style="left:3px">00DC5D44</span><span class="g" style="left:63px">00000000</span></div>
<div class="r" style="top:216px"><span class="g" style="left:3px">00DC5D48</span><span class="g" style="left:63px">00DC5E20</span></div>
</div>
<div style="left:817px;top:655px;font:16px/20px 'Liberation Sans','Noto Sans CJK SC',sans-serif;color:#fff;text-shadow:1px 1px 1px #222,0 0 1px #555;letter-spacing:0;transform-origin:0 0;transform:scaleX(.944)">360<span style="position:static;display:inline;font-size:14.500px">安全播报</span></div>
<div style="left:903px;top:655px;font:16px/20px 'Liberation Sans','Noto Sans CJK SC',sans-serif;color:#fff;text-shadow:1px 1px 1px #222,0 0 1px #555;letter-spacing:0;transform-origin:0 0;transform:scaleX(.918)">( bobao.360.cn )</div>
</div>
</body></html>
